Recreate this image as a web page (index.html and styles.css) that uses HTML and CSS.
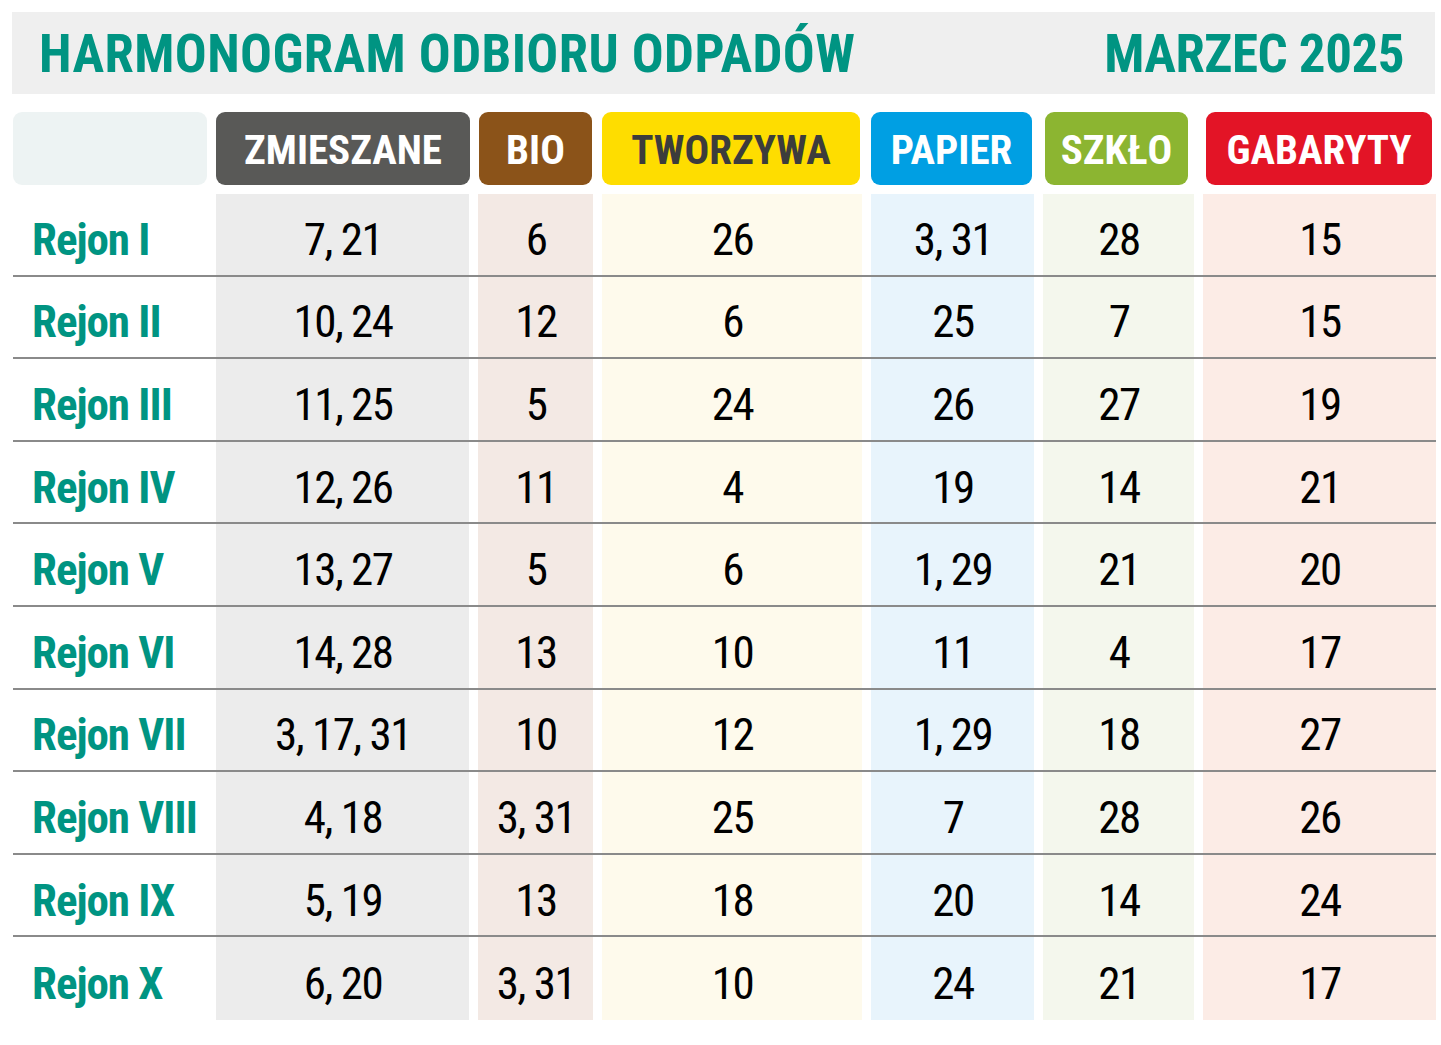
FILE: index.html
```html
<!DOCTYPE html>
<html lang="pl">
<head>
<meta charset="utf-8">
<title>Harmonogram odbioru odpadów – marzec 2025</title>
<link rel="stylesheet" href="styles.css">
</head>
<body>
<main class="sheet">
  <header class="title-bar">
    <h1 class="title">HARMONOGRAM ODBIORU ODPADÓW</h1>
    <div class="month">MARZEC 2025</div>
  </header>

  <div class="grid head-row">
    <div class="hcell blank"></div>
    <div class="hcell h-mixed">ZMIESZANE</div>
    <div class="hcell h-bio">BIO</div>
    <div class="hcell h-plastic">TWORZYWA</div>
    <div class="hcell h-paper">PAPIER</div>
    <div class="hcell h-glass">SZKŁO</div>
    <div class="hcell h-bulky">GABARYTY</div>
  </div>

  <div class="body">
    <div class="grid row"><div class="label">Rejon I</div><div class="c mixed">7, 21</div><div class="c bio">6</div><div class="c plastic">26</div><div class="c paper">3, 31</div><div class="c glass">28</div><div class="c bulky">15</div></div>
    <div class="grid row"><div class="label">Rejon II</div><div class="c mixed">10, 24</div><div class="c bio">12</div><div class="c plastic">6</div><div class="c paper">25</div><div class="c glass">7</div><div class="c bulky">15</div></div>
    <div class="grid row"><div class="label">Rejon III</div><div class="c mixed">11, 25</div><div class="c bio">5</div><div class="c plastic">24</div><div class="c paper">26</div><div class="c glass">27</div><div class="c bulky">19</div></div>
    <div class="grid row"><div class="label">Rejon IV</div><div class="c mixed">12, 26</div><div class="c bio">11</div><div class="c plastic">4</div><div class="c paper">19</div><div class="c glass">14</div><div class="c bulky">21</div></div>
    <div class="grid row"><div class="label">Rejon V</div><div class="c mixed">13, 27</div><div class="c bio">5</div><div class="c plastic">6</div><div class="c paper">1, 29</div><div class="c glass">21</div><div class="c bulky">20</div></div>
    <div class="grid row"><div class="label">Rejon VI</div><div class="c mixed">14, 28</div><div class="c bio">13</div><div class="c plastic">10</div><div class="c paper">11</div><div class="c glass">4</div><div class="c bulky">17</div></div>
    <div class="grid row"><div class="label">Rejon VII</div><div class="c mixed">3, 17, 31</div><div class="c bio">10</div><div class="c plastic">12</div><div class="c paper">1, 29</div><div class="c glass">18</div><div class="c bulky">27</div></div>
    <div class="grid row"><div class="label">Rejon VIII</div><div class="c mixed">4, 18</div><div class="c bio">3, 31</div><div class="c plastic">25</div><div class="c paper">7</div><div class="c glass">28</div><div class="c bulky">26</div></div>
    <div class="grid row"><div class="label">Rejon IX</div><div class="c mixed">5, 19</div><div class="c bio">13</div><div class="c plastic">18</div><div class="c paper">20</div><div class="c glass">14</div><div class="c bulky">24</div></div>
    <div class="grid row last"><div class="label">Rejon X</div><div class="c mixed">6, 20</div><div class="c bio">3, 31</div><div class="c plastic">10</div><div class="c paper">24</div><div class="c glass">21</div><div class="c bulky">17</div></div>
  </div>
</main>
</body>
</html>
```

FILE: styles.css
```css
* { box-sizing: border-box; }

html, body {
  margin: 0;
  padding: 0;
  background: #ffffff;
}

body {
  font-family: "Roboto Condensed", "Liberation Sans Narrow", "DejaVu Sans Condensed", "Liberation Sans", sans-serif;
  color: #000;
}

.sheet {
  width: 1441px;
  padding: 12px 5px 0 12px;
}

.title-bar {
  height: 82px;
  width: 1423px;
  background: #efefef;
  display: flex;
  align-items: center;
  justify-content: space-between;
  padding: 2px 31px 0 27px;
  color: #009482;
  font-weight: 700;
  font-size: 53px;
}

.title {
  margin: 0;
  font-size: inherit;
  font-weight: inherit;
  letter-spacing: 0.4px;
}

.month {
  letter-spacing: -0.5px;
}

.grid {
  display: grid;
  grid-template-columns: 194px 253px 115px 260px 163px 151px 233px;
  column-gap: 9px;
  margin-left: 1px;
  width: 1423px;
}

.head-row {
  margin-top: 18px;
  height: 73px;
}

.hcell {
  border-radius: 9px;
  display: flex;
  align-items: center;
  justify-content: center;
  color: #fff;
  font-weight: 700;
  font-size: 41px;
  letter-spacing: 0;
  padding-top: 2px;
}

.blank { background: #edf3f3; }
.h-mixed { background: #595957; margin-right: -1px; }
.h-bio { background: #8b5319; margin-left: 1px; margin-right: 1px; }
.h-plastic { background: #fedd00; color: #3c3c3c; margin-right: 2px; }
.h-paper { background: #009fe3; margin-right: 2px; }
.h-glass { background: #8cb531; margin-left: 2px; margin-right: 6px; }
.h-bulky { background: #e31426; margin-left: 3px; margin-right: 4px; }

.body {
  margin-top: 9px;
}

.row {
  height: 82.6px;
  border-bottom: 2px solid #8a8a8a;
  width: 1423px;
}

.row.last {
  border-bottom: 0;
}

.label {
  display: flex;
  align-items: center;
  padding: 10px 0 0 19px;
  color: #009482;
  font-weight: 700;
  font-size: 45px;
  letter-spacing: -1px;
}

.c {
  display: flex;
  align-items: center;
  justify-content: center;
  padding: 10px 0 0 1px;
  font-size: 45px;
  letter-spacing: -1.5px;
  color: #000;
}

.mixed { background: #ececec; }
.bio { background: #f3e9e4; }
.plastic { background: #fefaec; }
.paper { background: #e8f4fc; }
.glass { background: #f4f7ed; }
.bulky { background: #fcece6; }
```
